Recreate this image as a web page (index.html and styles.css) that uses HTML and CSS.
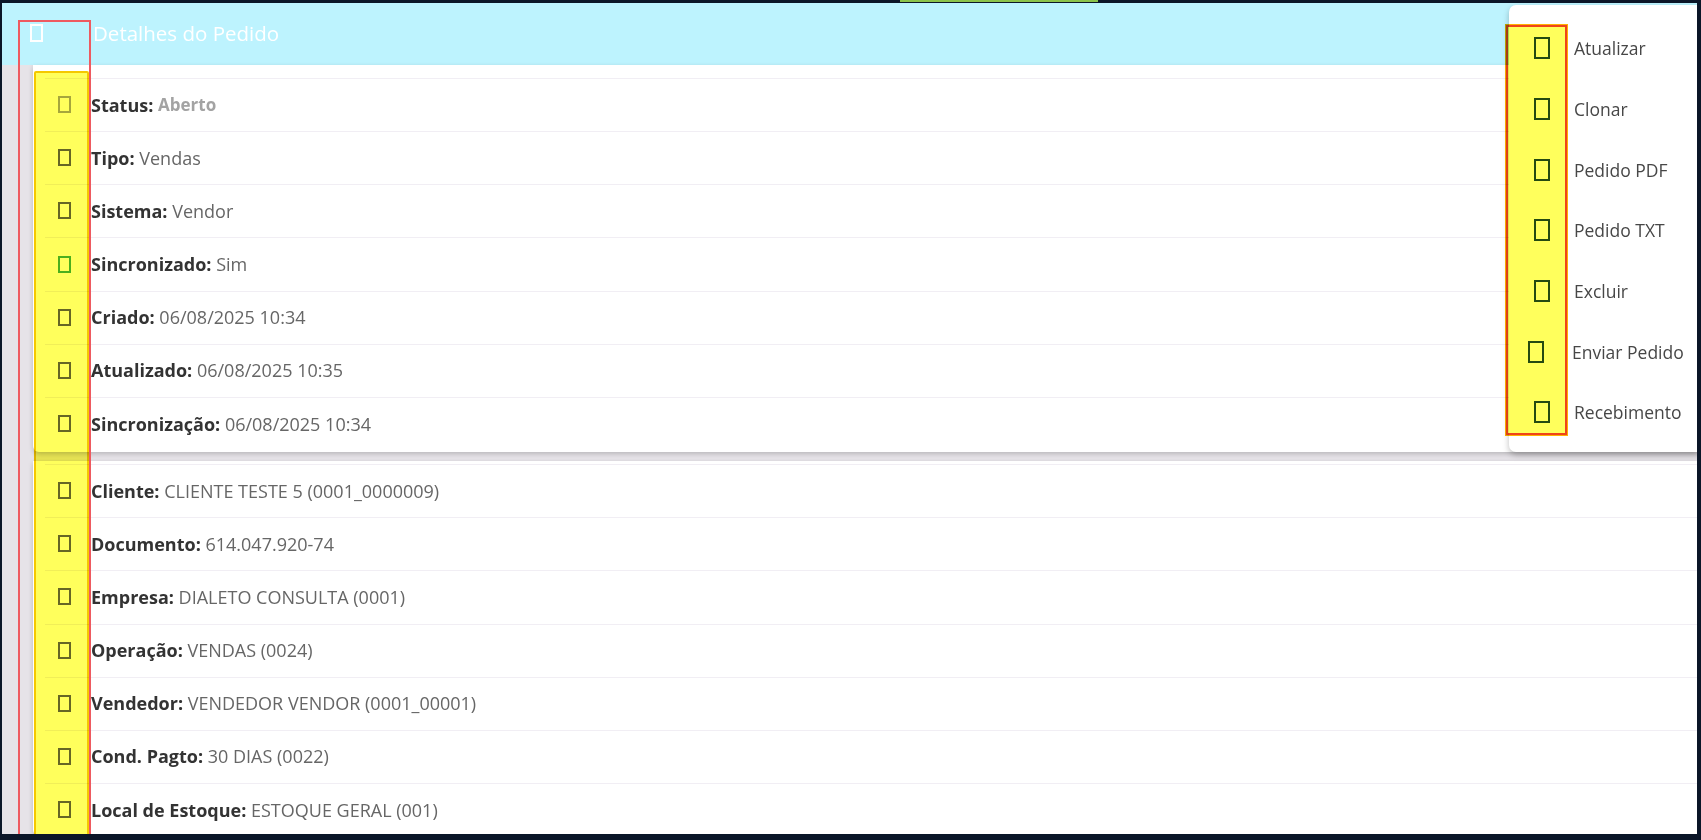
FILE: index.html
```html
<!DOCTYPE html>
<html>
<head>
  <meta charset="utf-8">
  <title>Detalhes do Pedido</title>
  <link rel="stylesheet" href="styles.css">
</head>
<body>
  <div class="loadbar"></div>

  <div class="screen">
    <!-- Cabeçalho -->
    <header class="topbar">
      <span class="glyph glyph-white"></span>
      <h1>Detalhes do Pedido</h1>
    </header>

    <main class="content">
      <!-- Situação do pedido -->
      <section class="card card-top">
        <ul class="rows">
          <li class="row"><span class="glyph glyph-light"></span><b>Status:</b>&nbsp;<span class="muted">Aberto</span></li>
          <li class="row"><span class="glyph"></span><b>Tipo:</b>&nbsp;Vendas</li>
          <li class="row"><span class="glyph"></span><b>Sistema:</b>&nbsp;Vendor</li>
          <li class="row"><span class="glyph glyph-green"></span><b>Sincronizado:</b>&nbsp;Sim</li>
          <li class="row"><span class="glyph"></span><b>Criado:</b>&nbsp;06/08/2025 10:34</li>
          <li class="row"><span class="glyph"></span><b>Atualizado:</b>&nbsp;06/08/2025 10:35</li>
          <li class="row"><span class="glyph"></span><b>Sincronização:</b>&nbsp;06/08/2025 10:34</li>
        </ul>
      </section>

      <!-- Dados do cliente -->
      <section class="card">
        <ul class="rows">
          <li class="row"><span class="glyph"></span><b>Cliente:</b>&nbsp;CLIENTE TESTE 5 (0001_0000009)</li>
          <li class="row"><span class="glyph"></span><b>Documento:</b>&nbsp;614.047.920-74</li>
          <li class="row"><span class="glyph"></span><b>Empresa:</b>&nbsp;DIALETO CONSULTA (0001)</li>
          <li class="row"><span class="glyph"></span><b>Operação:</b>&nbsp;VENDAS (0024)</li>
          <li class="row"><span class="glyph"></span><b>Vendedor:</b>&nbsp;VENDEDOR VENDOR (0001_00001)</li>
          <li class="row"><span class="glyph"></span><b>Cond. Pagto:</b>&nbsp;30 DIAS (0022)</li>
          <li class="row"><span class="glyph"></span><b>Local de Estoque:</b>&nbsp;ESTOQUE GERAL (001)</li>
        </ul>
      </section>
    </main>

    <!-- Menu de ações -->
    <nav class="menu">
      <a class="menu-item"><span class="glyph glyph-dark"></span>Atualizar</a>
      <a class="menu-item"><span class="glyph glyph-dark"></span>Clonar</a>
      <a class="menu-item"><span class="glyph glyph-dark"></span>Pedido PDF</a>
      <a class="menu-item"><span class="glyph glyph-dark"></span>Pedido TXT</a>
      <a class="menu-item"><span class="glyph glyph-dark"></span>Excluir</a>
      <a class="menu-item menu-item-shift"><span class="glyph glyph-dark"></span>Enviar Pedido</a>
      <a class="menu-item"><span class="glyph glyph-dark"></span>Recebimento</a>
    </nav>

    <!-- marcações -->
    <div class="mark mark-yellow-left"></div>
    <div class="mark mark-red-left"></div>
    <div class="mark mark-yellow-menu"></div>
  </div>
</body>
</html>
```

FILE: styles.css
```css
body {
  margin: 0;
  padding: 3px 4px 6px 2px;
  background-color: #0b1628;
  font-family: "Open Sans", "Noto Sans", sans-serif;
  position: relative;
}

.loadbar {
  position: absolute;
  top: 0;
  left: 900px;
  width: 198px;
  height: 2px;
  background-color: #8bc34a;
}

.screen {
  position: relative;
  height: 831px;
  overflow: hidden;
  background-color: #e6e3e8;
}

/* header */
.topbar {
  height: 62px;
  background-color: #bdf3fe;
  display: flex;
  align-items: center;
  padding-left: 28px;
  padding-bottom: 2px;
  box-sizing: border-box;
}

.topbar h1 {
  margin: 0 0 0 50px;
  font-size: 20.5px;
  font-weight: normal;
  color: #fff;
}

/* glyph (icone sem fonte) */
.glyph {
  display: inline-block;
  width: 13px;
  height: 17px;
  border: 2px solid #666;
  box-sizing: border-box;
  flex: none;
}

.glyph-white {
  border-color: #fff;
  height: 18px;
}

.glyph-light {
  border-color: #a6a6a6;
}

.glyph-green {
  border-color: #4caf50;
}

.glyph-dark {
  width: 16px;
  height: 22px;
  border-color: #254a2d;
}

/* cards */
.content {
  padding-left: 31px;
}

.card {
  background-color: #fff;
  padding: 3px 0 0 12px;
  box-shadow: 0 2px 5px rgba(0, 0, 0, 0.2);
  border-radius: 0 0 0 6px;
}

.card-top {
  padding-top: 13px;
  padding-bottom: 2px;
  margin-bottom: 9px;
  position: relative;
}

.rows {
  list-style: none;
  margin: 0;
  padding: 0;
}

.row {
  height: 53.17px;
  box-sizing: border-box;
  border-top: 1px solid #f1eef4;
  display: flex;
  align-items: center;
  padding-left: 13px;
  padding-bottom: 1px;
  font-size: 18px;
  color: #666;
}

.row .glyph {
  margin-right: 20px;
}

.row b {
  color: #333;
}

.muted {
  color: #a3a3a3;
  font-weight: bold;
  font-size: 17px;
}

/* menu */
.menu {
  position: absolute;
  top: 2px;
  left: 1507px;
  width: 200px;
  height: 447px;
  background-color: #fff;
  border-radius: 7px;
  box-shadow: 0 3px 6px rgba(0, 0, 0, 0.25);
  padding-top: 13px;
  box-sizing: border-box;
}

.menu-item {
  height: 60.67px;
  display: flex;
  align-items: center;
  padding-left: 25px;
  font-size: 17.5px;
  color: #474747;
}

.menu-item .glyph {
  margin-right: 24px;
}

.menu-item-shift {
  padding-left: 19px;
}

.menu-item-shift .glyph {
  margin-right: 28px;
}

/* marcações de destaque */
.mark {
  position: absolute;
  box-sizing: border-box;
}

.mark-yellow-left {
  left: 32px;
  top: 68px;
  width: 55px;
  height: 800px;
  background-color: #ffff5c;
  border: 2px solid #f5c800;
  border-radius: 2px;
  mix-blend-mode: multiply;
}

.mark-red-left {
  left: 16px;
  top: 17px;
  width: 73px;
  height: 830px;
  border: 2px solid #ee5a60;
}

.mark-yellow-menu {
  left: 1504px;
  top: 22px;
  width: 61px;
  height: 410px;
  background-color: #ffff5c;
  border: 2px solid #ef4419;
  box-shadow: 0 0 0 1px #ffb000;
  mix-blend-mode: multiply;
}
```
